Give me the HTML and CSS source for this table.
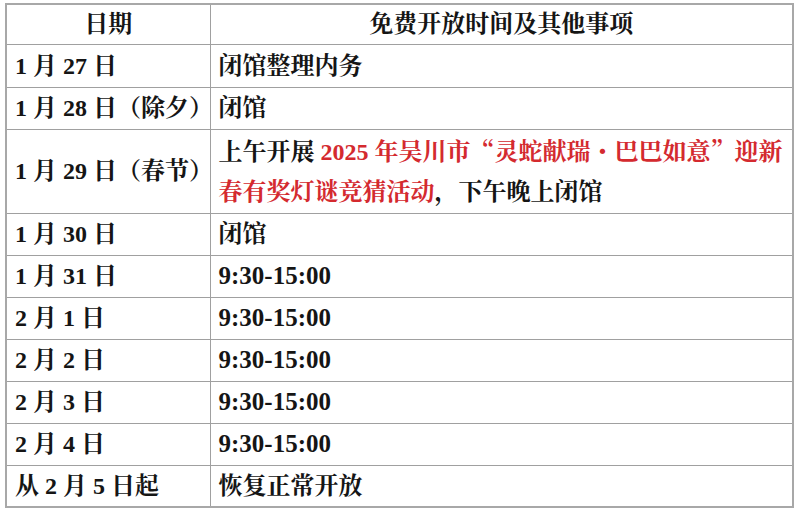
FILE: index.html
```html
<!DOCTYPE html>
<html lang="zh-CN">
<head>
<meta charset="utf-8">
<link rel="stylesheet" href="styles.css">
</head>
<body>
<table class="schedule">
  <colgroup><col class="c-date"><col class="c-info"></colgroup>
  <tr class="head"><th>日期</th><th>免费开放时间及其他事项</th></tr>
  <tr class="r43"><td>1 月 27 日</td><td>闭馆整理内务</td></tr>
  <tr class="r42"><td>1 月 28 日（除夕）</td><td>闭馆</td></tr>
  <tr class="r84"><td>1 月 29 日（春节）</td><td class="multi">上午开展 <span class="red">2025 年吴川市<span class="cjk">“</span>灵蛇献瑞<span class="cjk">・</span>巴巴如意<span class="cjk">”</span>迎新<br>春有奖灯谜竞猜活动</span>，下午晚上闭馆</td></tr>
  <tr class="r42"><td>1 月 30 日</td><td>闭馆</td></tr>
  <tr class="r42"><td>1 月 31 日</td><td class="time">9:30-15:00</td></tr>
  <tr class="r42"><td>2 月 1 日</td><td class="time">9:30-15:00</td></tr>
  <tr class="r42"><td>2 月 2 日</td><td class="time">9:30-15:00</td></tr>
  <tr class="r42"><td>2 月 3 日</td><td class="time">9:30-15:00</td></tr>
  <tr class="r42"><td>2 月 4 日</td><td class="time">9:30-15:00</td></tr>
  <tr class="r42"><td>从 2 月 5 日起</td><td>恢复正常开放</td></tr>
</table>
</body>
</html>
```
FILE: styles.css
```css
html, body {
  margin: 0;
  padding: 0;
  background: #ffffff;
}
body {
  padding: 3px 6px 0 5px;
  font-family: "Liberation Serif", "Noto Serif CJK SC", "Noto Sans CJK SC", serif;
  font-weight: bold;
  font-size: 24px;
  color: #151515;
}
.schedule {
  width: 789px;
  border-collapse: collapse;
  table-layout: fixed;
  border: 2px solid #a8a8a8;
}
.c-date { width: 204px; }
.schedule th,
.schedule td {
  border: 1px solid #a0a0a0;
  padding: 0 8px;
  vertical-align: middle;
  text-align: left;
  line-height: 30px;
  white-space: nowrap;
}
.schedule th {
  text-align: center;
  font-weight: bold;
}
.head { height: 40px; }
.r43 { height: 43px; }
.r42 { height: 42px; }
.r84 { height: 84px; }
.schedule td.multi { line-height: 40px; }
.schedule td.time { font-size: 25px; }
.red { color: #d42a2f; }
.cjk { font-family: "Noto Serif CJK SC", "Noto Sans CJK SC", sans-serif; }
```
